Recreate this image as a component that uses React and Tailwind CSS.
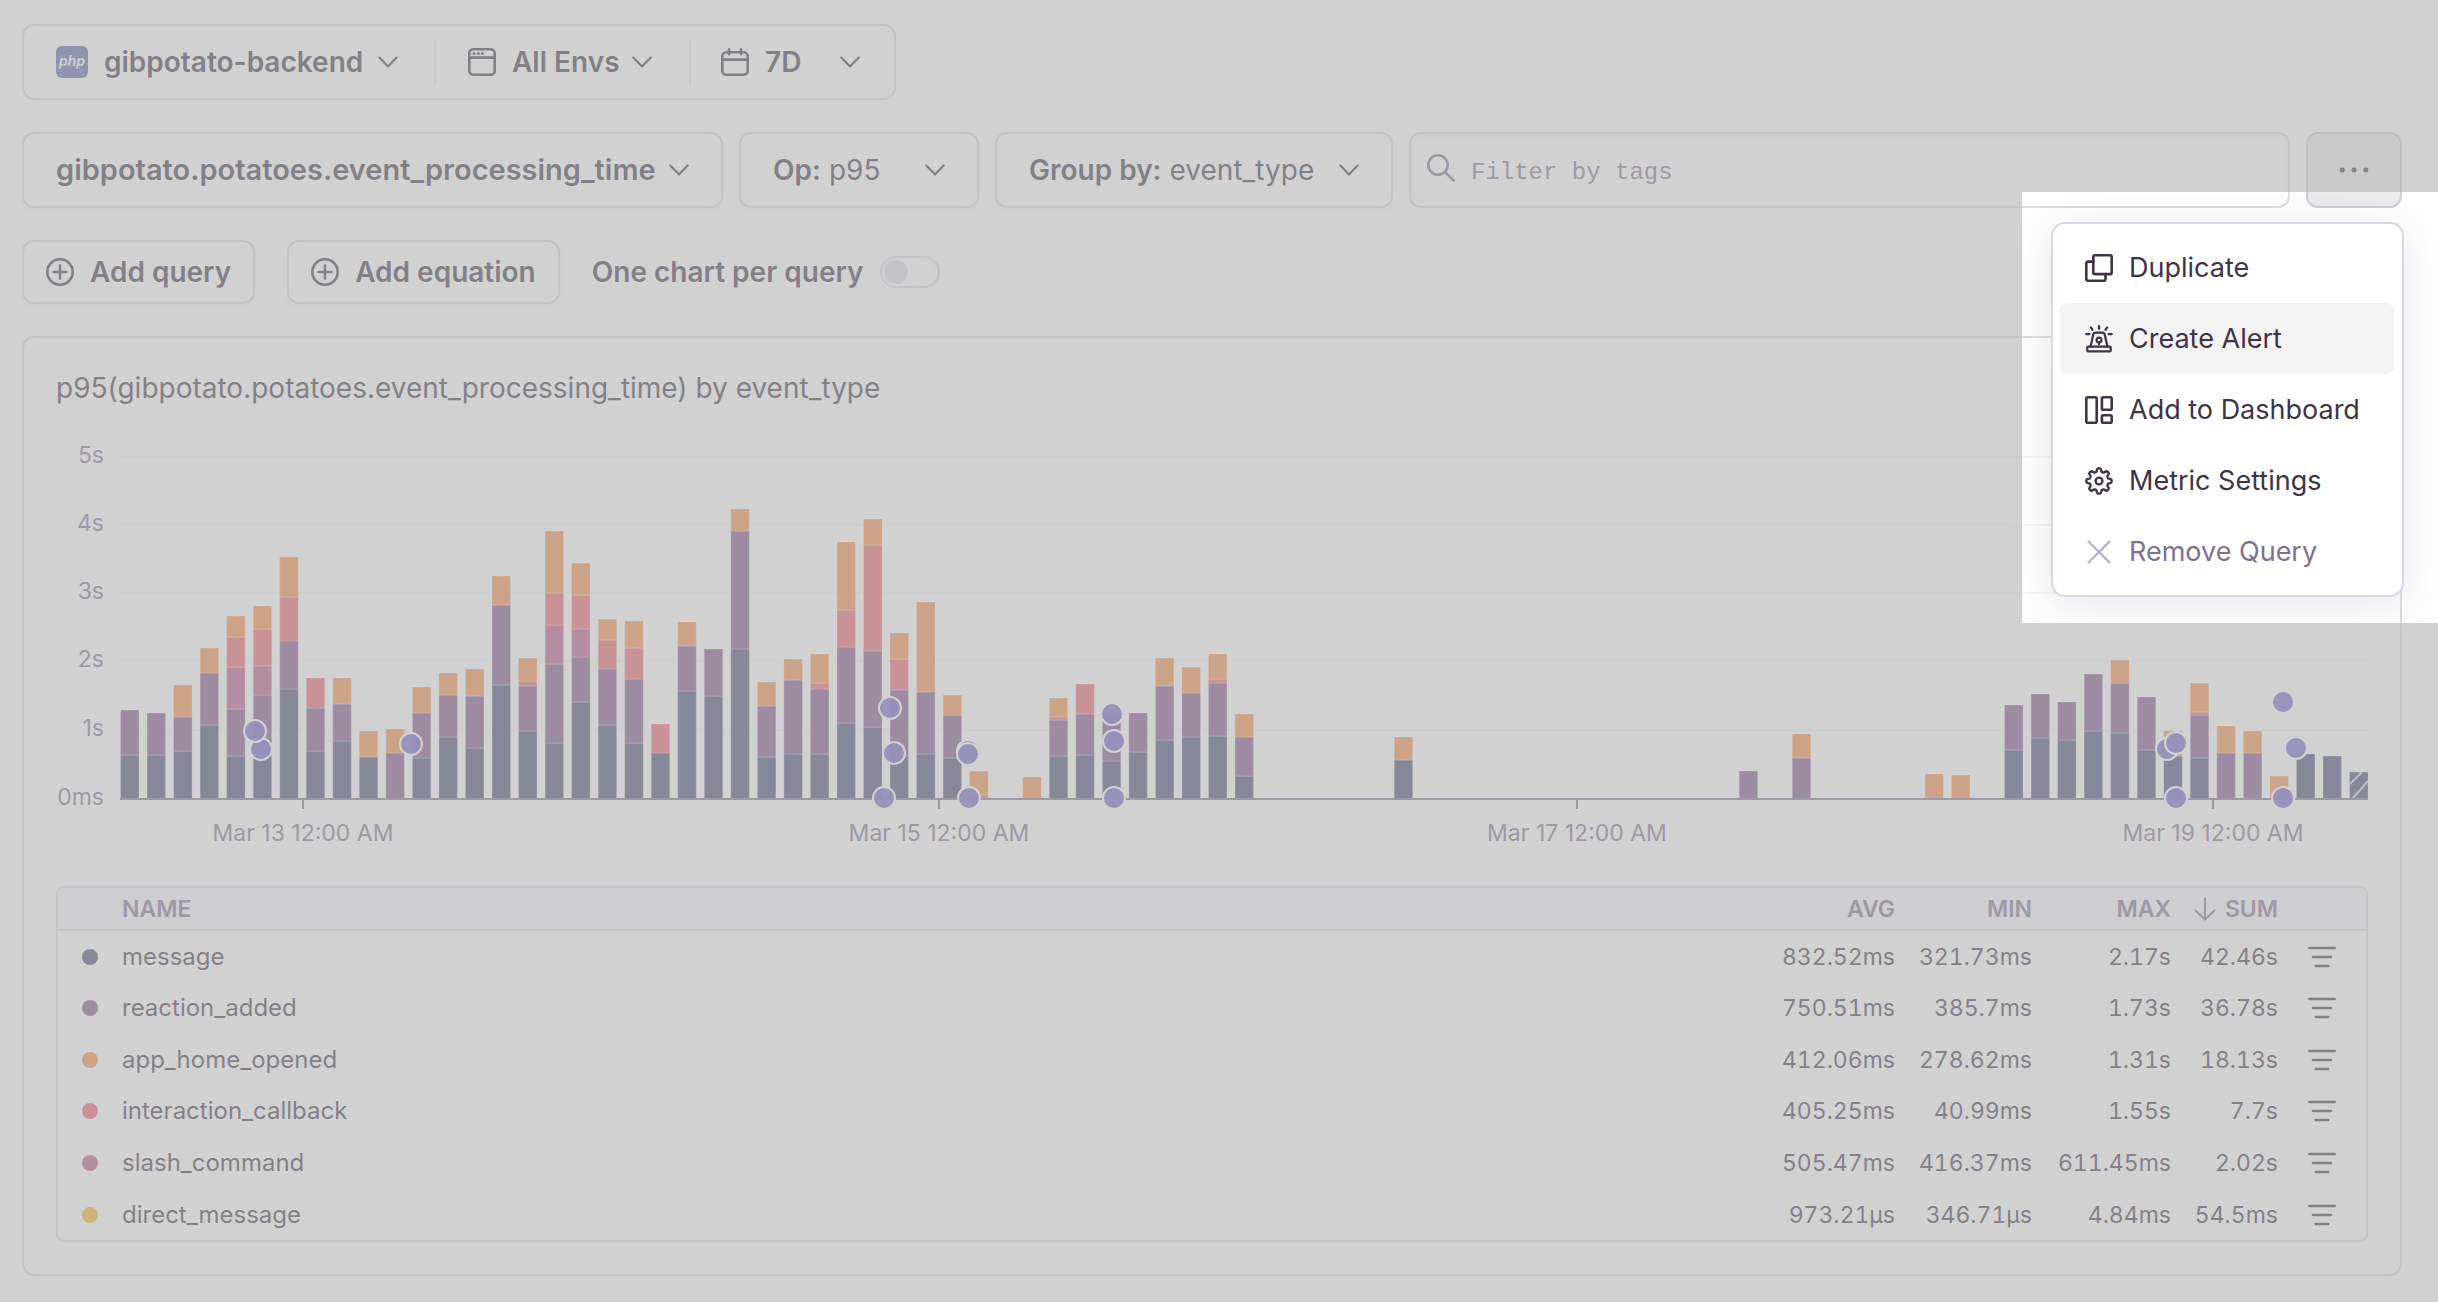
import React from "react";

/* ---------- icons ---------- */

function Icon({ children, size = 28, className = "" }) {
  return (
    <svg
      viewBox={`0 0 ${size} ${size}`}
      width={size}
      height={size}
      fill="none"
      stroke="currentColor"
      strokeWidth="2.6"
      strokeLinecap="round"
      strokeLinejoin="round"
      aria-hidden="true"
      className={`shrink-0 ${className}`}
    >
      {children}
    </svg>
  );
}

const Chevron = () => (
  <Icon size={20} className="pointer-events-none">
    <path d="M1.3 5.6 10 14.4l8.7-8.8" strokeWidth="2.2" />
  </Icon>
);

const WindowIcon = () => (
  <Icon>
    <rect x="1.3" y="1.3" width="25.4" height="25.4" rx="4" />
    <path d="M1.3 9.6h25.4" />
    <g fill="currentColor" stroke="none">
      <circle cx="6" cy="5.6" r="1.5" />
      <circle cx="10.2" cy="5.6" r="1.5" />
      <circle cx="14.4" cy="5.6" r="1.5" />
    </g>
  </Icon>
);

const CalendarIcon = () => (
  <Icon>
    <rect x="1.3" y="4.3" width="25.4" height="22.4" rx="4" />
    <path d="M1.3 11.6h25.4M8 1.3v5M20 1.3v5" />
  </Icon>
);

const PlusCircle = () => (
  <Icon>
    <circle cx="14" cy="14" r="12.7" />
    <path d="M14 7.6v12.8M7.6 14h12.8" />
  </Icon>
);

const SearchIcon = () => (
  <Icon className="mb-1">
    <circle cx="11" cy="11" r="9.7" />
    <path d="m18 18 8.7 8.7" />
  </Icon>
);

const DotsIcon = () => (
  <Icon size={32}>
    <g fill="currentColor" stroke="none">
      <circle cx="4.2" cy="16" r="2.5" />
      <circle cx="16" cy="16" r="2.5" />
      <circle cx="27.8" cy="16" r="2.5" />
    </g>
  </Icon>
);

const DuplicateIcon = () => (
  <Icon>
    <rect x="8.3" y="1.3" width="18.4" height="18.8" rx="1.6" />
    <path d="M8.3 7.6H3a1.6 1.6 0 0 0-1.7 1.6v15.9a1.6 1.6 0 0 0 1.7 1.6h15.9a1.6 1.6 0 0 0 1.6-1.6v-5" />
  </Icon>
);

const SirenIcon = () => (
  <Icon>
    <path
      d="M14 1.2v2.6M5.8 2.4l1.6 2.3M22.2 2.4l-1.6 2.3M1.2 9.1h3.2M23.6 9.1h3.2"
      strokeWidth="2.3"
    />
    <path d="M5.6 21.6 8.2 9.8a2.8 2.8 0 0 1 2.7-2.2h6.2a2.8 2.8 0 0 1 2.7 2.2l2.6 11.8" strokeWidth="2.2" />
    <rect x="2.3" y="21.6" width="23.4" height="4.8" rx="1" strokeWidth="2.2" />
    <circle cx="14" cy="15" r="2.4" strokeWidth="2.2" />
    <path d="M14 17.4v2" strokeWidth="2.2" />
  </Icon>
);

const DashboardIcon = () => (
  <Icon>
    <rect x="1.3" y="1.3" width="10.4" height="25.4" rx="1.5" />
    <rect x="16.9" y="1.3" width="9.8" height="12.4" rx="1.5" />
    <rect x="16.9" y="19.3" width="9.8" height="7.4" rx="1.5" />
  </Icon>
);

const gearPath = (() => {
  const pts = [];
  for (let i = 0; i < 160; i += 1) {
    const a = (i / 160) * Math.PI * 2;
    const r = 11 + 1.7 * Math.tanh(1.9 * Math.cos(8 * a));
    pts.push(`${(14 + r * Math.cos(a)).toFixed(2)} ${(14 + r * Math.sin(a)).toFixed(2)}`);
  }
  return `M${pts.join("L")}Z`;
})();

const GearIcon = () => (
  <Icon>
    <path d={gearPath} strokeWidth="2.4" />
    <circle cx="14" cy="14" r="3.4" strokeWidth="2.4" />
  </Icon>
);

const CloseIcon = () => (
  <Icon className="text-[#B9B2C4]">
    <path d="M3.5 3.5l21 21M24.5 3.5l-21 21" strokeWidth="2.4" />
  </Icon>
);

const FilterIcon = () => (
  <Icon>
    <path d="M1.3 5h25.4M5 14h18M7.8 23h12.4" />
  </Icon>
);

const SortArrow = () => (
  <Icon size={24}>
    <path d="M12 1.5v21M2.5 13.5 12 22.5l9.5-9" strokeWidth="2.2" />
  </Icon>
);

/* ---------- chart ---------- */

const COLORS = {
  M: "#444674",
  R: "#7A5088",
  P: "#B85586",
  I: "#E9626E",
  O: "#F58C46",
  Y: "#F2B712",
};

/* [slot, series in stacking order, cumulative heights] */
const BARS = [
  [0, "MR", [44, 89]],
  [1, "MR", [44, 86]],
  [2, "MRO", [48, 82, 114]],
  [3, "MRO", [74, 126, 151]],
  [4, "MRPIO", [43, 90, 132, 162, 183]],
  [5, "MRPIO", [62, 104, 133, 170, 193]],
  [6, "MRIO", [110, 158, 202, 242]],
  [7, "MRI", [48, 91, 121]],
  [8, "MRO", [58, 95, 121]],
  [9, "MO", [42, 68]],
  [10, "RO", [46, 70]],
  [11, "MRO", [41, 86, 112]],
  [12, "MRO", [62, 104, 126]],
  [13, "MRO", [51, 103, 130]],
  [14, "MRO", [114, 194, 223]],
  [15, "MRIO", [68, 113, 118, 141]],
  [16, "MRPIO", [56, 135, 174, 206, 268]],
  [17, "MRPIO", [97, 142, 170, 204, 236]],
  [18, "MRIO", [74, 130, 159, 180]],
  [19, "MRIO", [56, 120, 151, 178]],
  [20, "MI", [46, 75]],
  [21, "MRO", [108, 153, 177]],
  [22, "MR", [103, 150]],
  [23, "MRO", [150, 268, 290]],
  [24, "MRO", [42, 93, 117]],
  [25, "MRO", [45, 119, 140]],
  [26, "MRIO", [45, 110, 116, 145]],
  [27, "MRIO", [76, 152, 189, 257]],
  [28, "MRIO", [72, 148, 254, 280]],
  [29, "MRIO", [43, 109, 140, 166]],
  [30, "MRO", [45, 107, 197]],
  [31, "MRO", [41, 84, 104]],
  [32, "IO", [4, 28]],
  [34, "O", [22]],
  [35, "MRIO", [43, 79, 82, 101]],
  [36, "MRI", [44, 85, 115]],
  [37, "MR", [38, 84]],
  [38, "MR", [47, 86]],
  [39, "MRO", [59, 113, 141]],
  [40, "MRO", [62, 106, 132]],
  [41, "MRIO", [63, 116, 120, 145]],
  [42, "MRO", [23, 62, 85]],
  [48, "MO", [39, 62]],
  [61, "R", [28]],
  [63, "RO", [41, 65]],
  [68, "O", [25]],
  [69, "O", [24]],
  [71, "MR", [49, 94]],
  [72, "MR", [61, 105]],
  [73, "MR", [59, 97]],
  [74, "MR", [68, 125]],
  [75, "MRO", [66, 116, 139]],
  [76, "MR", [49, 102]],
  [77, "MO", [43, 68]],
  [78, "MRIO", [41, 84, 87, 116]],
  [79, "RO", [46, 73]],
  [80, "RO", [46, 68]],
  [81, "O", [23]],
  [82, "M", [45]],
  [83, "M", [43]],
  [84, "M", [27]],
];

const SAMPLES = [
  [205, 339], [199, 321], [355, 334], [828, 388], [834, 298], [838, 343],
  [912, 341], [912, 344], [913, 388], [1056, 304], [1058, 331], [1058, 388],
  [2111, 339], [2120, 333], [2120, 388], [2227, 292], [2240, 338], [2227, 388],
];

const GRID = [["5s", 47], ["4s", 115], ["3s", 183], ["2s", 251], ["1s", 320]];
const TICKS = [[247, "Mar 13 12:00 AM"], [883, "Mar 15 12:00 AM"], [1521, "Mar 17 12:00 AM"], [2157, "Mar 19 12:00 AM"]];
const BASE = 389;
const PITCH = (2312 - 64 - 19) / 84;

function Chart() {
  return (
    <svg viewBox="0 0 2312 440" className="block h-auto w-full" role="img" aria-label="Event processing time, p95 by event type">
      {GRID.map(([label, y]) => (
        <g key={label}>
          <path d={`M64 ${y}H2312`} stroke="#F7F5F9" strokeWidth="2" />
          <text x="48" y={y + 6} textAnchor="end" className="fill-[#80708F] text-[23px]">{label}</text>
        </g>
      ))}
      <text x="48" y={BASE + 6} textAnchor="end" className="fill-[#80708F] text-[23px]">0ms</text>
      {BARS.map(([slot, series, tops]) => {
        const x = 64.5 + slot * PITCH;
        return series.split("").map((key, i) => {
          const from = i === 0 ? 0 : tops[i - 1];
          return (
            <rect
              key={`${slot}${key}`}
              x={x}
              y={BASE - tops[i]}
              width="18.5"
              height={tops[i] - from}
              fill={COLORS[key]}
              stroke="#fff"
              strokeOpacity="0.3"
            />
          );
        });
      })}
      {/* the newest bucket is still filling, so it is hatched */}
      <path d="M2294 374 2306 362M2297 388 2312 371" stroke="#fff" strokeOpacity="0.75" strokeWidth="2" />
      <path d={`M64 ${BASE}H2312`} stroke="#80708F" strokeWidth="2" />
      {TICKS.map(([x, label]) => (
        <g key={label}>
          <path d={`M${x} ${BASE}v10`} stroke="#80708F" strokeWidth="2" />
          <text x={x} y="431" textAnchor="middle" className="fill-[#80708F] text-[23px]">{label}</text>
        </g>
      ))}
      {SAMPLES.map(([x, y]) => (
        <circle key={`${x}-${y}`} cx={x} cy={y} r="11" fill="#6C5FC7" fillOpacity="0.95" stroke="#fff" strokeWidth="2" />
      ))}
    </svg>
  );
}

/* ---------- summary table ---------- */

const ROWS = [
  ["message", "bg-[#444674]", "832.52ms", "321.73ms", "2.17s", "42.46s"],
  ["reaction_added", "bg-[#7A5088]", "750.51ms", "385.7ms", "1.73s", "36.78s"],
  ["app_home_opened", "bg-[#F58C46]", "412.06ms", "278.62ms", "1.31s", "18.13s"],
  ["interaction_callback", "bg-[#E9626E]", "405.25ms", "40.99ms", "1.55s", "7.7s"],
  ["slash_command", "bg-[#B85586]", "505.47ms", "416.37ms", "611.45ms", "2.02s"],
  ["direct_message", "bg-[#F2B712]", "973.21µs", "346.71µs", "4.84ms", "54.5ms"],
];

function SummaryTable() {
  return (
    <div className="mt-9 overflow-hidden rounded-lg border-2 border-[#E0DCE5]">
      <table className="w-full table-fixed border-collapse text-2xl">
        <colgroup>
          <col className="w-[52px]" />
          <col />
          <col className="w-[137px]" />
          <col className="w-[137px]" />
          <col className="w-[139px]" />
          <col className="w-[107px]" />
          <col className="w-[76px]" />
        </colgroup>
        <thead>
          <tr className="h-[42px] border-b-2 border-[#E0DCE5] bg-[#F8F6FA] text-[23px] leading-8 text-[#80708F]">
            <th aria-label="Series colour" />
            <th scope="col" className="px-3 text-left font-semibold">NAME</th>
            <th scope="col" className="pr-3 text-right font-semibold">AVG</th>
            <th scope="col" className="pr-3 text-right font-semibold">MIN</th>
            <th scope="col" className="pr-3 text-right font-semibold">MAX</th>
            <th scope="col" aria-sort="descending" className="pr-3 font-semibold">
              <span className="flex items-center justify-end gap-2">
                <SortArrow />
                SUM
              </span>
            </th>
            <th aria-label="Actions" />
          </tr>
        </thead>
        <tbody>
          {ROWS.map(([name, dot, ...values], row) => (
            <tr key={name} className={`leading-8 ${row % 3 === 2 ? "h-[51px]" : "h-[52px]"}`}>
              <td>
                <span className={`ml-6 block size-4 rounded-full ${dot}`} />
              </td>
              <td className="px-3">{name}</td>
              {values.map((value, i) => (
                <td key={i} className="pr-3 text-right text-[23px] tabular-nums">{value}</td>
              ))}
              <td>
                <button type="button" aria-label={`Filter by ${name}`} className="ml-[18px] block">
                  <FilterIcon />
                </button>
              </td>
            </tr>
          ))}
        </tbody>
      </table>
    </div>
  );
}

/* ---------- controls ---------- */

const BOX = "flex h-[76px] items-center rounded-xl border-2 border-[#E0DCE5] bg-white";

function QuerySelect({ label, name, options, className, strong }) {
  return (
    <label className={`${BOX} shrink-0 px-8 shadow-[0_2px_4px_rgba(43,34,51,0.06)] ${className}`}>
      {label && <span className="mr-2 font-semibold">{label}</span>}
      <select
        aria-label={name}
        className={`min-w-0 appearance-none bg-transparent outline-none ${strong ? "font-semibold" : ""}`}
      >
        {options.map((o) => (
          <option key={o}>{o}</option>
        ))}
      </select>
      <span className="ml-auto">
        <Chevron />
      </span>
    </label>
  );
}

const MENU = [
  ["Duplicate", DuplicateIcon],
  ["Create Alert", SirenIcon],
  ["Add to Dashboard", DashboardIcon],
  ["Metric Settings", GearIcon],
  ["Remove Query", CloseIcon],
];

function QueryMenu() {
  return (
    <div
      role="menu"
      aria-label="Query actions"
      className="absolute -right-0.5 top-[90px] z-10 w-[353px] rounded-[14px] border-2 border-[#DCD5E4] bg-white py-2 pl-[7px] pr-2 shadow-[0_8px_48px_rgba(43,51,51,0.12)]"
    >
      {MENU.map(([label, Glyph]) => (
        <button
          key={label}
          type="button"
          role="menuitem"
          className={`flex h-[71px] w-full items-center gap-4 rounded-lg pl-[25px] text-[27px] ${
            label === "Create Alert" ? "bg-[#F3F3F3]" : ""
          } ${label === "Remove Query" ? "text-[#80708F]" : ""}`}
        >
          <Glyph />
          {label}
        </button>
      ))}
    </div>
  );
}

const ADD = "flex h-16 items-center gap-4 rounded-xl border-2 border-[#E0DCE5] bg-white px-[22px] font-semibold shadow-[0_2px_4px_rgba(43,34,51,0.06)]";

export default function App() {
  return (
    <main className="relative flex min-h-screen flex-col gap-8 overflow-hidden bg-white py-6 pl-[22px] pr-9 font-['Inter',sans-serif] text-[28px] leading-10 text-[#3E3446]">
      {/* page filters */}
      <div className={`${BOX} self-start font-semibold`}>
        <label className="flex h-[46px] w-[412px] items-center border-r-2 border-[#F0ECF3] pl-8">
          <span className="mr-4 flex size-8 shrink-0 items-center justify-center rounded-md bg-[#5C68A2] pb-0.5 text-sm font-semibold italic leading-none text-white">
            php
          </span>
          <select aria-label="Project" className="mr-3.5 appearance-none bg-transparent outline-none">
            <option>gibpotato-backend</option>
          </select>
          <Chevron />
        </label>
        <label className="flex h-[46px] w-[255px] items-center border-r-2 border-[#F0ECF3] pl-8">
          <WindowIcon />
          <select aria-label="Environment" className="ml-4 mr-3 appearance-none bg-transparent outline-none">
            <option>All Envs</option>
          </select>
          <Chevron />
        </label>
        <label className="flex h-[46px] w-[203px] items-center pl-[30px] pr-[34px]">
          <CalendarIcon />
          <select aria-label="Time range" className="ml-4 mr-auto appearance-none bg-transparent outline-none">
            <option>7D</option>
          </select>
          <Chevron />
        </label>
      </div>

      {/* query row */}
      <div className="flex gap-4">
        <QuerySelect name="Metric" strong options={["gibpotato.potatoes.event_processing_time"]} className="w-[701px] text-[29px]" />
        <QuerySelect label="Op:" name="Operation" options={["p95", "p50"]} className="w-[240px]" />
        <QuerySelect label="Group by:" name="Group by" options={["event_type"]} className="w-[398px]" />
        <label className={`${BOX} min-w-0 flex-1 pl-4 text-[#80708F] shadow-[inset_0_2px_4px_rgba(43,34,51,0.04)]`}>
          <SearchIcon />
          <input
            type="text"
            aria-label="Filter by tags"
            placeholder="Filter by tags"
            className="ml-4 min-w-0 flex-1 bg-transparent pt-1.5 font-['Liberation_Mono',monospace] text-2xl outline-none placeholder:text-[#80708F]"
          />
        </label>
        <div className="relative shrink-0">
          <button
            type="button"
            aria-label="More actions"
            aria-haspopup="menu"
            aria-expanded="true"
            className="flex h-[76px] w-24 items-center justify-center rounded-xl border-2 border-[#D3CCDA] bg-[#EBEBEB]"
          >
            <DotsIcon />
          </button>
          <QueryMenu />
          {/* spotlight: dims everything outside its own box */}
          <div className="pointer-events-none absolute -right-9 top-[60px] z-20 h-[431px] w-[416px] shadow-[0_0_0_4000px_rgba(178,178,178,0.6)]" />
        </div>
      </div>

      {/* add row */}
      <div className="flex items-center gap-8">
        <button type="button" className={ADD}>
          <PlusCircle />
          Add query
        </button>
        <button type="button" className={ADD}>
          <PlusCircle />
          Add equation
        </button>
        <label className="flex items-center gap-4 font-semibold">
          One chart per query
          <input
            type="checkbox"
            role="switch"
            className="flex h-8 w-[60px] appearance-none items-center rounded-full border-2 border-[#E0DCE5] px-0.5 shadow-[inset_0_2px_4px_rgba(43,34,51,0.04)] before:size-6 before:rounded-full before:bg-[#DEDCE5]"
          />
        </label>
      </div>

      {/* chart panel */}
      <section className="rounded-xl border-2 border-[#E0DCE5] px-8 pb-8 pt-8">
        <h2 className="mb-1 leading-9">p95(gibpotato.potatoes.event_processing_time) by event_type</h2>
        <Chart />
        <SummaryTable />
      </section>
    </main>
  );
}
